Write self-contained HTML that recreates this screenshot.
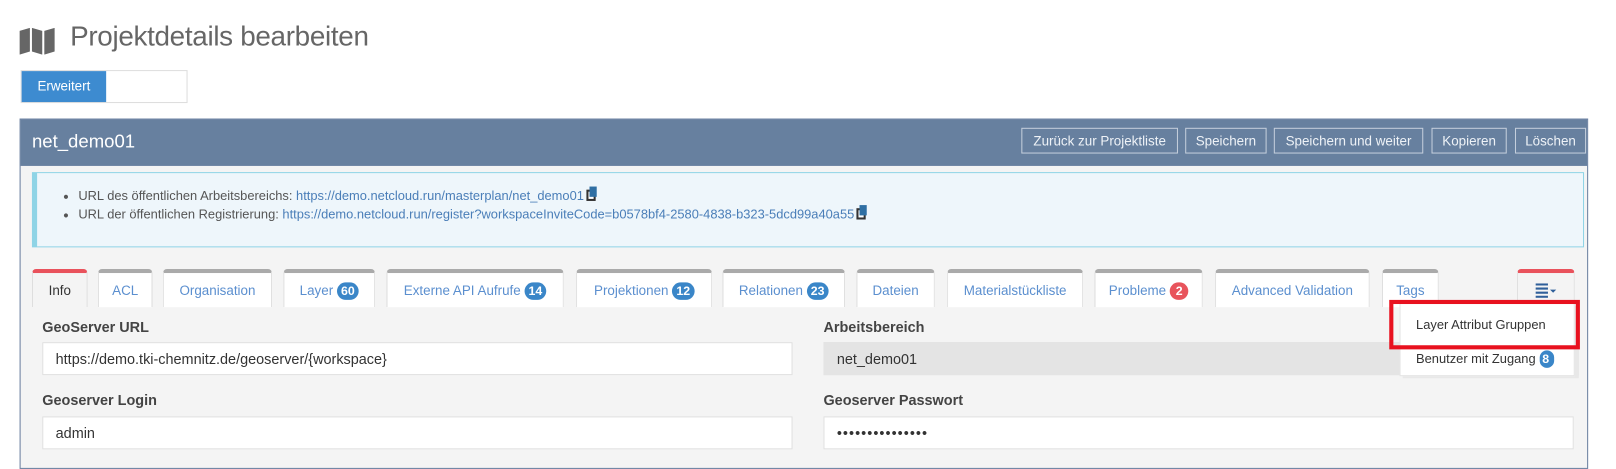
<!DOCTYPE html>
<html><head><meta charset="utf-8"><style>
*{box-sizing:border-box;margin:0;padding:0}
html,body{width:1616px;height:457px;overflow:hidden;background:#fff}
#w{position:absolute;left:0;top:0;width:1568px;height:444px;transform:scale(1.0306);transform-origin:0 0;font-family:"Liberation Sans",sans-serif;font-size:13px;color:#333}
.a{position:absolute}
.title{left:68px;top:20px;font-size:27px;color:#666;font-weight:normal;letter-spacing:-0.3px}
.tog{left:20px;top:68px;width:162px;height:32px;border:1px solid #ddd;background:#fff}
.tog div{position:absolute;left:0;top:0;width:82px;height:30px;background:#3d8bd0;color:#fff;font-size:13px;line-height:30px;text-align:center}
.panel{left:19px;top:115px;width:1522px;height:340px;border:1px solid #6a7fa0;background:#f4f4f4}
.hdr{left:0;top:0;width:1520px;height:45px;background:#67809f}
.hdr .t{position:absolute;left:11px;top:11px;color:#fff;font-size:18px}
.btn{position:absolute;top:8px;height:25px;border:1px solid #c4cedc;color:#eef2f7;font-size:13px;line-height:23px;text-align:center}
.info{left:11px;top:51px;width:1506px;height:73px;background:#eef6fb;border:1px solid #8fd4e6;border-left:5px solid #8fd4e6}
.info ul{position:absolute;left:40px;top:13px;font-size:12.5px;color:#555;line-height:18px}
.info a{color:#4a7eb8;text-decoration:none}
.cp{display:inline-block;width:9px;height:11px;border:2px solid #333;margin-left:2px;vertical-align:-1px;position:relative;background:#fff}
.cp:after{content:"";position:absolute;left:1px;top:-5px;width:7px;height:10px;background:#2f6fa3}
.tab{position:absolute;top:145px;height:37px;background:#fff;border:1px solid #ddd;border-top:4px solid #aaa;border-bottom:none;border-radius:4px 4px 0 0;color:#5b8fcf;font-size:13px;text-align:center;line-height:33px}
.b{display:inline-block;background:#3a86c8;color:#fff;font-weight:bold;font-size:12px;border-radius:9px;padding:0 4px;line-height:17px;min-width:18px}
.r{background:#e8545c}
.lbl{position:absolute;font-size:14px;color:#444;font-weight:bold}
.inp{position:absolute;height:32px;background:#fff;border:1px solid #e0e0e0;font-size:14px;line-height:30px;padding-left:12px;color:#333}
</style></head><body><div id="w">
<svg class="a" style="left:19px;top:27px" width="35" height="26" viewBox="0 0 35 26"><path d="M0 3 L10 0 L10 23 L0 26Z M12 0 L22 3 L22 26 L12 23Z M24 3 L34 0 L34 23 L24 26Z" fill="#666"/></svg>
<div class="a title">Projektdetails bearbeiten</div>
<div class="a tog"><div>Erweitert</div></div>
<div class="a panel">
 <div class="a hdr"><div class="t">net_demo01</div>
  <div class="btn" style="left:971px;width:152px">Zurück zur Projektliste</div>
  <div class="btn" style="left:1130px;width:79px">Speichern</div>
  <div class="btn" style="left:1216px;width:145px">Speichern und weiter</div>
  <div class="btn" style="left:1369px;width:73px">Kopieren</div>
  <div class="btn" style="left:1450px;width:69px">Löschen</div>
 </div>
 <div class="a info"><ul>
  <li>URL des öffentlichen Arbeitsbereichs: <a>https://demo.netcloud.run/masterplan/net_demo01</a><span class="cp"></span></li>
  <li>URL der öffentlichen Registrierung: <a>https://demo.netcloud.run/register?workspaceInviteCode=b0578bf4-2580-4838-b323-5dcd99a40a55</a><span class="cp"></span></li>
 </ul></div>
 <div class="tab" style="left:11px;width:54px;border-top-color:#e9525c;color:#333;background:#f4f4f4">Info</div>
 <div class="tab" style="left:75px;width:53px">ACL</div>
 <div class="tab" style="left:138px;width:106px">Organisation</div>
 <div class="tab" style="left:255px;width:89px">Layer <span class="b">60</span></div>
 <div class="tab" style="left:355px;width:172px">Externe API Aufrufe <span class="b">14</span></div>
 <div class="tab" style="left:539px;width:132px">Projektionen <span class="b">12</span></div>
 <div class="tab" style="left:681px;width:119px">Relationen <span class="b">23</span></div>
 <div class="tab" style="left:811px;width:76px">Dateien</div>
 <div class="tab" style="left:899px;width:132px">Materialstückliste</div>
 <div class="tab" style="left:1042px;width:105px">Probleme <span class="b r">2</span></div>
 <div class="tab" style="left:1159px;width:150px">Advanced Validation</div>
 <div class="tab" style="left:1321px;width:55px">Tags</div>
 <div class="tab" style="left:1452px;width:56px;border-top-color:#e9525c;background:#f4f4f4">
  <svg style="position:absolute;left:17px;top:10px" width="22" height="14" viewBox="0 0 22 14"><path d="M0 1h12M0 5h12M0 9h12M0 13h12" stroke="#2f5f9a" stroke-width="2"/><path d="M14 6h6l-3 3z" fill="#2f5f9a"/></svg>
 </div>
 <div class="lbl" style="left:21px;top:193px">GeoServer URL</div>
 <div class="inp" style="left:21px;top:216px;width:728px">https://demo.tki-chemnitz.de/geoserver/{workspace}</div>
 <div class="lbl" style="left:779px;top:193px">Arbeitsbereich</div>
 <div class="inp" style="left:779px;top:216px;width:733px;background:#e4e4e4;border-color:#e4e4e4">net_demo01</div>
 <div class="lbl" style="left:21px;top:264px">Geoserver Login</div>
 <div class="inp" style="left:21px;top:288px;width:728px">admin</div>
 <div class="lbl" style="left:779px;top:264px">Geoserver Passwort</div>
 <div class="inp" style="left:779px;top:288px;width:728px;letter-spacing:1px">•••••••••••••••</div>
 <div class="a" style="left:1341px;top:181px;width:171px;height:70px;background:#e8e8e8"></div>
 <div class="a" style="left:1338px;top:178px;width:170px;height:71px;background:#fff;border:1px solid #e4e4e4;font-size:12.5px">
  <div class="a" style="left:15px;top:13px">Layer Attribut Gruppen</div>
  <div class="a" style="left:15px;top:45px">Benutzer mit Zugang <span class="b" style="padding:0 3px;min-width:14px">8</span></div>
 </div>
 <div class="a" style="left:1328px;top:175px;width:185px;height:48px;border:4px solid #e8111f"></div>
</div>
</div></body></html>
